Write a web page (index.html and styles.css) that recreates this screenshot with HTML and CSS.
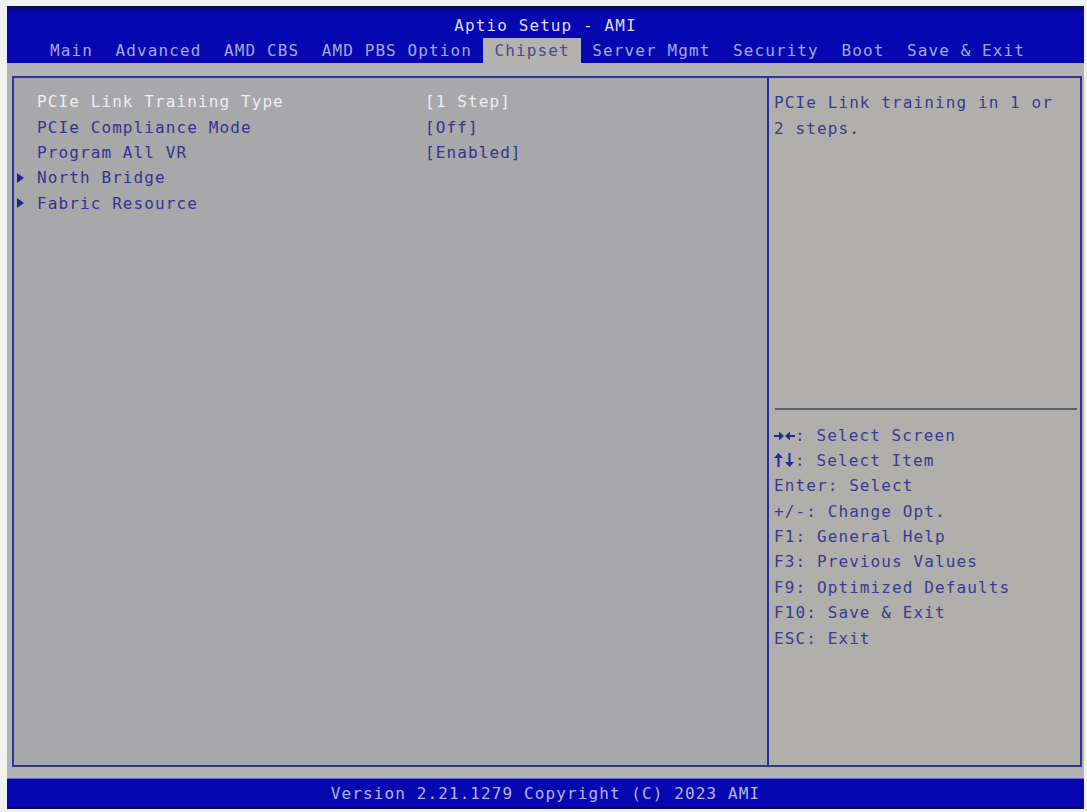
FILE: index.html
```html
<!DOCTYPE html>
<html lang="en">
<head>
    <meta charset="UTF-8">
    <meta name="viewport" content="width=device-width, initial-scale=1.0">
    <title>Aptio Setup - AMI</title>
    <link rel="stylesheet" href="styles.css">
</head>
<body>

    <div class="screen">
        <header class="top-bar">
            <div class="title">Aptio Setup - AMI</div>
            <nav class="tabs">
                <span class="tab">Main</span>
                <span class="tab">Advanced</span>
                <span class="tab">AMD CBS</span>
                <span class="tab">AMD PBS Option</span>
                <span class="tab active">Chipset</span>
                <span class="tab">Server Mgmt</span>
                <span class="tab">Security</span>
                <span class="tab">Boot</span>
                <span class="tab">Save &amp; Exit</span>
            </nav>
        </header>

        <main class="body">
            <div class="frame">
                <section class="menu">
                    <div class="item selected">
                        <span class="mark"></span>
                        <span class="label">PCIe Link Training Type</span>
                        <span class="value">[1 Step]</span>
                    </div>
                    <div class="item">
                        <span class="mark"></span>
                        <span class="label">PCIe Compliance Mode</span>
                        <span class="value">[Off]</span>
                    </div>
                    <div class="item">
                        <span class="mark"></span>
                        <span class="label">Program All VR</span>
                        <span class="value">[Enabled]</span>
                    </div>
                    <div class="item">
                        <span class="mark arrow"></span>
                        <span class="label">North Bridge</span>
                    </div>
                    <div class="item">
                        <span class="mark arrow"></span>
                        <span class="label">Fabric Resource</span>
                    </div>
                </section>

                <aside class="help">
                    <div class="help-text">PCIe Link training in 1 or<br>2 steps.</div>
                    <div class="help-rule"></div>
                    <ul class="keys">
                        <!-- right / left arrows -->
                        <li><svg class="key" width="21" height="12" viewBox="0 0 21 12">
                                <rect x="0" y="5" width="6" height="2"/>
                                <polygon points="5,1.5 10,6 5,10.5"/>
                                <rect x="15" y="5" width="6" height="2"/>
                                <polygon points="16,1.5 11,6 16,10.5"/>
                            </svg>: Select Screen</li>
                        <!-- up / down arrows -->
                        <li><svg class="key" width="21" height="14" viewBox="0 0 21 14">
                                <polygon points="4.5,0 9,5 0,5"/>
                                <rect x="3.5" y="4" width="2" height="10"/>
                                <rect x="14.5" y="0" width="2" height="10"/>
                                <polygon points="15.5,14 20,9 11,9"/>
                            </svg>: Select Item</li>
                        <li>Enter: Select</li>
                        <li>+/-: Change Opt.</li>
                        <li>F1: General Help</li>
                        <li>F3: Previous Values</li>
                        <li>F9: Optimized Defaults</li>
                        <li>F10: Save &amp; Exit</li>
                        <li>ESC: Exit</li>
                    </ul>
                </aside>
            </div>
        </main>

        <footer class="bottom-bar">Version 2.21.1279 Copyright (C) 2023 AMI</footer>
    </div>

</body>
</html>
```

FILE: styles.css
```css
* {
    margin: 0;
    padding: 0;
    box-sizing: border-box;
}

body {
    background-color: #f1f1f1;
    font-family: "DejaVu Sans Mono", "Liberation Mono", monospace;
    font-size: 16px;
    letter-spacing: 1.1px;
}

.screen {
    width: 1077px;
    height: 803px;
    margin: 6px 0 0 7px;
    display: flex;
    flex-direction: column;
}

/* blue title bar with the tab strip */
.top-bar {
    height: 57px;
    background: linear-gradient(#0b0b52 0, #0707b2 7px, #0707b2 100%);
}

.title {
    padding-top: 7px;
    line-height: 25px;
    text-align: center;
    color: #dcdcf2;
}

.tabs {
    display: flex;
    height: 25px;
    padding-left: 31.7px;
}

.tab {
    padding: 0 11.3px;
    line-height: 26px;
    color: #a2a9e4;
    white-space: pre;
}

.tab.active {
    background-color: #b3b2ae;
    color: #4a4a8e;
}

/* grey work area */
.body {
    flex: 1;
    background-color: #b3b2b4;
    padding: 13px 2px 11px 5px;
    display: flex;
}

.frame {
    flex: 1;
    min-width: 0;
    border: 2px solid #34348e;
    display: grid;
    grid-template-columns: 753px minmax(0, 1fr);
}

.menu {
    background-color: #a8a7aa;
    padding: 11px 0 0 3px;
}

.item {
    display: grid;
    grid-template-columns: 20px 388px auto;
    align-items: center;
    height: 25.4px;
    color: #34348f;
}

.item.selected {
    color: #eeeef5;
}

.mark.arrow {
    width: 0;
    height: 0;
    border-left: 7px solid #22229a;
    border-top: 5px solid transparent;
    border-bottom: 5px solid transparent;
}

.label,
.value {
    white-space: pre;
}

/* help column on the right */
.help {
    border-left: 2px solid #2a2aa6;
    background-color: #b0afab;
    padding: 0 2px 0 5px;
    color: #3a3a94;
}

.help-text {
    height: 330px;
    padding-top: 12px;
    line-height: 26px;
}

.help-rule {
    height: 2px;
    margin: 0 1px;
    background-color: #5c5c76;
}

.keys {
    list-style: none;
    padding-top: 12.5px;
}

.keys li {
    height: 25.4px;
    line-height: 25.4px;
    white-space: nowrap;
}

.key {
    fill: #2424a8;
    vertical-align: -1px;
}

/* version line */
.bottom-bar {
    height: 31px;
    background-color: #0707b2;
    border-top: 1px solid #6a6ad0;
    border-bottom: 2px solid #0c0c4c;
    padding-top: 2px;
    line-height: 26px;
    text-align: center;
    color: #b4b4e4;
}
```
